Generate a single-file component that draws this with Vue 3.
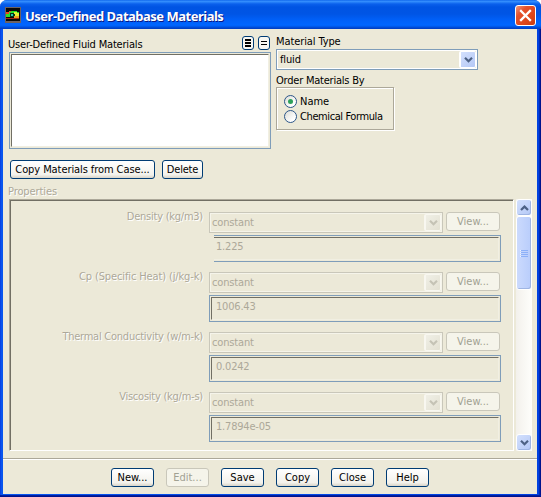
<script setup>
import { ref } from 'vue'

const order = ref('Name')
const orders = ['Name', 'Chemical Formula']
const properties = [
  { label: 'Density (kg/m3)', value: '1.225', clipped: true },
  { label: 'Cp (Specific Heat) (j/kg-k)', value: '1006.43', mild: true },
  { label: 'Thermal Conductivity (w/m-k)', value: '0.0242' },
  { label: 'Viscosity (kg/m-s)', value: '1.7894e-05' },
]
const actions = [
  { text: 'New...' },
  { text: 'Edit...', disabled: true },
  { text: 'Save' },
  { text: 'Copy' },
  { text: 'Close' },
  { text: 'Help' },
]
</script>

<template>
  <div class="window">
    <header class="titlebar">
      <svg class="app-icon" width="16" height="16" viewBox="0 0 16 16" shape-rendering="crispEdges">
        <rect width="16" height="16" fill="#6e6260" />
        <rect x="1" y="1" width="14" height="13" fill="#0a0806" />
        <path d="M1 7h2v-2h2v-1h7v1h2v6h-5v-1H1z" fill="#28e028" />
        <path d="M1 5h3v2H1zM4 4h2v1H4z" fill="#e84820" />
        <path d="M9 5h3v1h2v3H9z" fill="#e8f030" />
        <path d="M5 6h4v1h1v2H9v1H5z" fill="#063818" />
        <path d="M6 7h2v2H6z" fill="#28c8b0" />
        <path d="M9 9h5v2H9z" fill="#f0a020" />
        <path d="M1 11h13v1H1z" fill="#a02818" />
      </svg>
      <h1 class="title">User-Defined Database Materials</h1>
      <button class="close" aria-label="Close">
        <svg width="19" height="19" viewBox="0 0 19 19">
          <path d="M5 5l9 9M14 5l-9 9" stroke="#fff" stroke-width="2.3" stroke-linecap="square" />
        </svg>
      </button>
    </header>

    <main class="body">
      <section class="top">
        <div class="list-col">
          <div class="list-head">
            <span class="list-label">User-Defined Fluid Materials</span>
            <button class="mini">
              <svg width="6" height="8" viewBox="0 0 6 8" shape-rendering="crispEdges">
                <path d="M0 0h6v2H0zM0 3h6v2H0zM0 6h6v2H0z" fill="#000" />
              </svg>
            </button>
            <button class="mini">
              <svg width="6" height="8" viewBox="0 0 6 8" shape-rendering="crispEdges">
                <path d="M0 2h6v1H0zM0 5h6v1H0z" fill="#000" />
              </svg>
            </button>
          </div>
          <div class="listbox"><div class="listbox-inner"></div></div>
        </div>

        <div class="type-col">
          <span class="mt-label">Material Type</span>
          <div class="combo">
            <span class="combo-text">fluid</span>
            <span class="arrow">
              <svg width="9" height="6" viewBox="0 0 9 6"><path d="M1 .8l3.5 3.4L8 .8" fill="none" stroke="#4d6185" stroke-width="2.2" /></svg>
            </span>
          </div>
          <span class="ord-label">Order Materials By</span>
          <div class="group">
            <label v-for="o in orders" :key="o" class="radio" :class="{ long: o !== 'Name' }" @click="order = o">
              <span class="dot"><i v-if="order === o"></i></span>{{ o }}
            </label>
          </div>
        </div>
      </section>

      <section class="list-actions">
        <button class="btn wide">Copy Materials from Case...</button>
        <button class="btn del">Delete</button>
      </section>

      <span class="props-label">Properties</span>
      <section class="props">
        <div class="panel">
          <div v-for="p in properties" :key="p.label" class="row">
            <span class="prop-label" :class="{ mild: p.mild }">{{ p.label }}</span>
            <div class="controls">
              <div class="pick">
                <div class="combo off">
                  <span class="combo-text">constant</span>
                  <span class="arrow">
                    <svg width="9" height="6" viewBox="0 0 9 6"><path d="M1 .8l3.5 3.4L8 .8" fill="none" stroke="#c5c3b5" stroke-width="2.2" /></svg>
                  </span>
                </div>
                <button class="btn view" disabled>View...</button>
              </div>
              <div class="field" :class="{ clipped: p.clipped }"><div class="value">{{ p.value }}</div></div>
            </div>
          </div>
        </div>
        <div class="scrollbar">
          <span class="sb-btn">
            <svg width="9" height="6" viewBox="0 0 9 6"><path d="M1 5l3.5-3.4L8 5" fill="none" stroke="#4d6185" stroke-width="2.2" /></svg>
          </span>
          <span class="thumb"><i></i><i></i><i></i><i></i></span>
          <span class="sb-btn last">
            <svg width="9" height="6" viewBox="0 0 9 6"><path d="M1 .8l3.5 3.4L8 .8" fill="none" stroke="#4d6185" stroke-width="2.2" /></svg>
          </span>
        </div>
      </section>

      <footer class="footer">
        <button v-for="a in actions" :key="a.text" class="btn" :disabled="a.disabled">{{ a.text }}</button>
      </footer>
    </main>
  </div>
</template>

<style>
body {
  background: #fff;
  overflow: hidden;
}
</style>

<style scoped>
* {
  box-sizing: border-box;
}
.window {
  width: 541px;
  height: 497px;
  display: flex;
  flex-direction: column;
  padding: 0 4px 3px 3px;
  border-radius: 7px 7px 0 0;
  background: linear-gradient(90deg, #0831d9 0, #0855ee 1px, #0855ee 3px, #0040e0 537px, #0040e0 539px, #00138c 540px);
  box-shadow: inset 0 -1px #00138c, inset 0 -2px #001ea0;
  font: 11px/14px "DejaVu Sans Condensed", "DejaVu Sans", sans-serif;
  font-stretch: condensed;
  color: #000;
}
button {
  font: inherit;
  color: inherit;
  padding: 0;
  margin: 0;
}
span {
  white-space: nowrap;
}
.titlebar {
  height: 29px;
  flex: none;
  margin: 0 -4px 0 -3px;
  padding: 2px 5px 0 5px;
  display: flex;
  align-items: center;
  border-radius: 7px 7px 0 0;
  background: linear-gradient(180deg, #0058e6 0, #3a93ff 1px, #2a85fa 2px, #0a60ec 4px, #0054e3 7px, #0055e5 14px, #0060f8 20px, #0066ff 25px, #0060f5 26px, #0044cc 28px, #003dc0 29px);
}
.app-icon {
  flex: none;
  margin-top: -1px;
}
.title {
  margin: 1px auto 0 4px;
  font: bold 13px/18px "Noto Sans", sans-serif;
  letter-spacing: -0.5px;
  color: #fff;
  white-space: nowrap;
  text-shadow: 1px 1px 0 #0a1883;
}
.close {
  width: 21px;
  height: 21px;
  border: 1px solid #fff;
  border-radius: 3px;
  background: linear-gradient(135deg, #f0987c 0, #e5522d 30%, #dc4519 70%, #c83c10 100%);
  display: flex;
  align-items: center;
  justify-content: center;
}
.close svg {
  flex: none;
}
.body {
  flex: 1;
  background: #ece9d8;
  display: flex;
  flex-direction: column;
}
.top {
  display: flex;
  gap: 5px;
  padding: 6px 0 0 6px;
  height: 120px;
}
.list-col {
  width: 262px;
}
.list-head {
  display: flex;
  height: 17px;
  gap: 4px;
  padding-top: 1px;
  padding-right: 1px;
}
.list-label {
  flex: 1;
  padding-top: 2px;
  margin-left: -1px;
  height: 16px;
  letter-spacing: -0.18px;
}
.mini {
  width: 12px;
  height: 14px;
  border: 1px solid #003c74;
  border-radius: 3px;
  background: #f8f7f2;
  display: flex;
  align-items: center;
  justify-content: center;
}
.listbox {
  height: 97px;
  border: 1px solid #7f9db9;
  padding: 1px;
}
.listbox-inner {
  height: 93px;
  border: 1px solid;
  border-color: #716f64 #f1efe2 #f1efe2 #716f64;
  background: #fff;
}
.type-col {
  width: 202px;
  display: flex;
  flex-direction: column;
}
.mt-label {
  height: 14px;
  letter-spacing: -0.1px;
}
.combo {
  height: 21px;
  border: 1px solid #7f9db9;
  box-shadow: inset 0 0 0 1px #fff;
  padding: 1px;
  display: flex;
  justify-content: space-between;
}
.combo-text {
  padding: 2px 0 0 2px;
  letter-spacing: -0.15px;
}
.arrow {
  width: 17px;
  height: 17px;
  border: 1px solid #fff;
  border-left-width: 2px;
  border-radius: 2px;
  background: linear-gradient(135deg, #d3e0fd, #b4c8f6);
  display: flex;
  align-items: center;
  justify-content: center;
}
.ord-label {
  height: 17px;
  padding-top: 4px;
  letter-spacing: -0.22px;
}
.group {
  width: 118px;
  height: 43px;
  border: 1px solid #aca899;
  box-shadow: inset 1px 1px #fff, 1px 1px #fff;
  padding: 7px 0 0 7px;
}
.radio {
  display: flex;
  gap: 3px;
  height: 15px;
  white-space: nowrap;
}
.radio.long {
  letter-spacing: -0.4px;
}
.dot {
  width: 13px;
  height: 13px;
  border-radius: 50%;
  border: 1px solid #2c5689;
  background: linear-gradient(135deg, #dcdcd5, #fff 75%);
  display: flex;
  align-items: center;
  justify-content: center;
}
.dot i {
  width: 5px;
  height: 5px;
  border-radius: 50%;
  background: #2da05a;
}
.list-actions {
  display: flex;
  gap: 7px;
  padding: 11px 0 0 7px;
}
.btn {
  width: 43px;
  height: 19px;
  border: 1px solid #003c74;
  border-radius: 3px;
  background: linear-gradient(180deg, #fff, #f3f2ec 80%, #d9d4c8);
  white-space: nowrap;
  line-height: 17px;
  text-align: center;
}
.btn:disabled {
  border-color: #c9c7ba;
  background: #f5f4ea;
  color: #a1a192;
}
.btn.wide {
  width: 145px;
  letter-spacing: -0.08px;
}
.btn.del {
  width: 41px;
  letter-spacing: -0.2px;
}
.btn.view {
  width: 54px;
}
.props-label {
  margin: 6px 0 0 5px;
  height: 14px;
  color: #aca899;
  text-shadow: 1px 1px #fff;
  letter-spacing: -0.1px;
}
.props {
  display: flex;
  gap: 2px;
  padding-left: 6px;
}
.panel {
  width: 505px;
  height: 252px;
  border: 1px solid;
  border-color: #aca899 #fff #fff #aca899;
  box-shadow: inset 1px 1px #716f64;
  padding: 12px 0 0 1px;
}
.row {
  display: flex;
  height: 60px;
}
.prop-label {
  width: 192px;
  text-align: right;
  color: #aca899;
  text-shadow: 1px 1px #fff;
  height: 14px;
  margin-top: -2px;
  letter-spacing: -0.24px;
}
.prop-label.mild {
  letter-spacing: -0.13px;
}
.controls {
  width: 292px;
  margin-left: 6px;
}
.pick {
  display: flex;
  gap: 3px;
}
.combo.off {
  width: 234px;
  border-color: #c9c7ba;
  box-shadow: inset 0 0 0 1px #f5f4ea;
  color: #aca899;
}
.off .arrow {
  border-color: #f8f7f0;
  background: linear-gradient(135deg, #f0efe6, #e3e1d2);
}
.off .combo-text {
  padding-left: 1px;
}
.field {
  margin-top: 2px;
  height: 27px;
  border: 1px solid #7f9db9;
  padding: 1px;
}
.value {
  height: 23px;
  border: 1px solid;
  border-color: #716f64 #f1efe2 #f1efe2 #716f64;
  color: #aca899;
  padding: 2px 0 0 4px;
  letter-spacing: -0.2px;
}
.field.clipped {
  margin-left: 5px;
  border-left: 0;
  padding-left: 0;
}
.clipped .value {
  border-left: 0;
  padding-left: 2px;
}
.scrollbar {
  width: 16px;
  height: 252px;
  display: flex;
  flex-direction: column;
  background: linear-gradient(90deg, #f3f1ec, #fefefb);
}
.sb-btn {
  height: 17px;
  border: 1px solid #fff;
  border-radius: 3px;
  box-shadow: inset -1px -1px #9fb5e3;
  background: linear-gradient(135deg, #d3e0fd, #b4c8f6);
  display: flex;
  align-items: center;
  justify-content: center;
}
.last {
  margin-top: auto;
}
.thumb {
  height: 74px;
  border: 1px solid #fff;
  border-radius: 3px;
  box-shadow: inset -1px -1px #9fb5e3;
  background: linear-gradient(90deg, #cbdafd, #b9cdfb);
  display: flex;
  flex-direction: column;
  align-items: center;
  justify-content: center;
  gap: 1px;
}
.thumb i {
  width: 7px;
  height: 1px;
  background: #8cb0f8;
  box-shadow: -1px 0 #eef4fe;
}
.footer {
  margin-top: 7px;
  border-top: 1px solid #aca899;
  box-shadow: inset 0 1px #fff;
  padding: 9px 0 0 108px;
  display: flex;
  gap: 12px;
}
</style>
